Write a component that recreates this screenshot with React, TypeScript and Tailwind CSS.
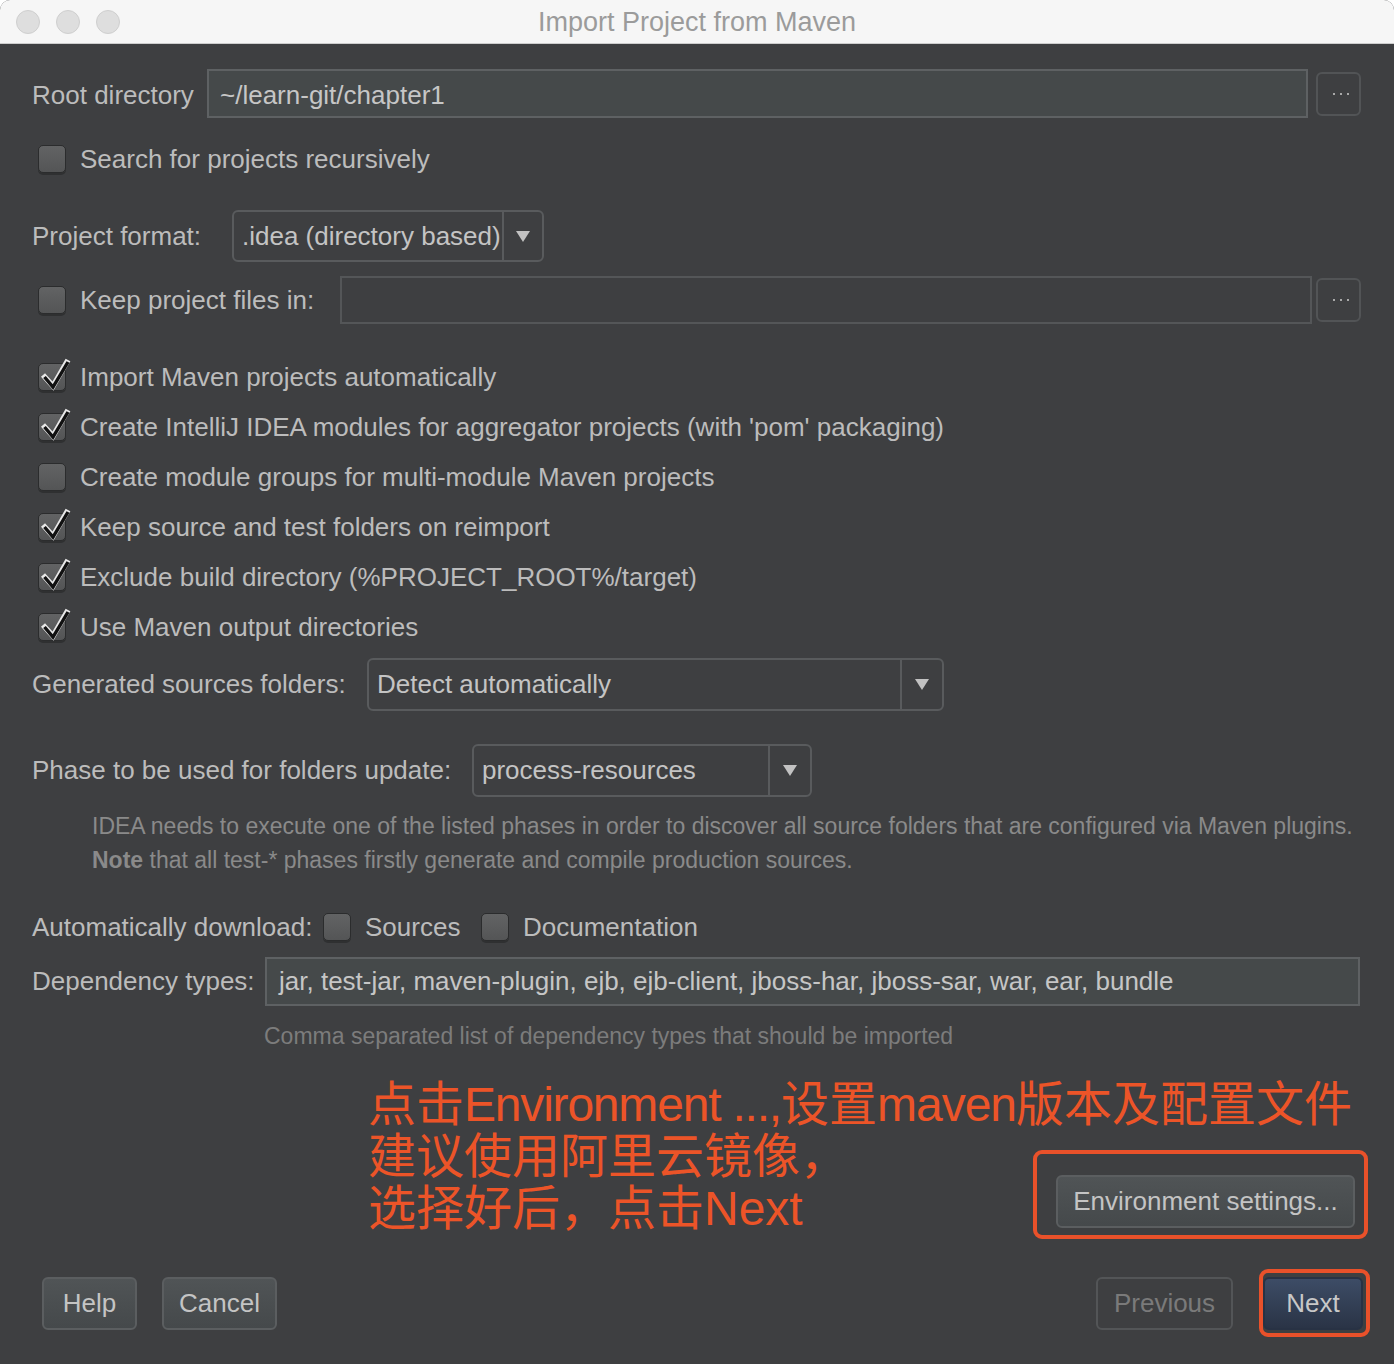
import React from "react";

const labelFont = "font-['Liberation_Sans',sans-serif]";

function CheckBox({ checked }: { checked?: boolean }) {
  return (
    <span className="relative inline-block h-[28px] w-[28px] shrink-0 rounded-[5px] border border-[#2b2c2d] bg-gradient-to-b from-[#626364] to-[#545556] shadow-[0_2px_0_#2f3031]">
      {checked && (
        <svg className="absolute left-[0px] top-[-8px]" width="34" height="36" viewBox="0 0 34 36">
          <path d="M4 19 L14 30 L29 4" fill="none" stroke="#e8e8e8" strokeWidth="5.5" strokeLinejoin="miter" />
          <path d="M5.5 21 L14 31 L29 6" fill="none" stroke="#111" strokeWidth="3.4" strokeLinejoin="miter" />
        </svg>
      )}
    </span>
  );
}

function DotsButton() {
  return (
    <div className="flex h-[44px] w-[45px] shrink-0 items-center justify-center rounded-[6px] border-2 border-[#525456] pl-[4px]">
      <span className="flex gap-[5px]">
        <span className="h-[2px] w-[2px] bg-[#a9a9a9]" />
        <span className="h-[2px] w-[2px] bg-[#a9a9a9]" />
        <span className="h-[2px] w-[2px] bg-[#a9a9a9]" />
      </span>
    </div>
  );
}

function Dropdown({ value, width, arrow = 40 }: { value: string; width: number; arrow?: number }) {
  return (
    <div
      className="flex h-full shrink-0 rounded-[6px] border-2 border-[#595b5d]"
      style={{ width }}
    >
      <div className="flex flex-1 items-center border-r-2 border-[#595b5d] pl-[8px] text-[26px] text-[#c4c4c4]">
        {value}
      </div>
      <div className="flex items-center justify-center" style={{ width: arrow }}>
        <svg width="14" height="11" viewBox="0 0 14 11">
          <path d="M0 0 H14 L7 11 Z" fill="#c2c2c2" />
        </svg>
      </div>
    </div>
  );
}

function CheckRow({ label, checked }: { label: string; checked?: boolean }) {
  return (
    <div className="flex h-[50px] items-center pl-[6px]">
      <CheckBox checked={checked} />
      <span className="ml-[14px] text-[26px] text-[#bcbcbc]">{label}</span>
    </div>
  );
}

function Button({ children, className = "" }: { children: React.ReactNode; className?: string }) {
  return (
    <div
      className={`flex h-[53px] items-center justify-center rounded-[6px] border-2 text-[26px] ${className}`}
    >
      {children}
    </div>
  );
}

export default function App() {
  return (
    <div className={`h-[1364px] w-[1394px] overflow-hidden bg-white ${labelFont}`}>
      <div className="flex h-[1364px] flex-col rounded-t-[10px] bg-[#3e3f41]">
        {/* Title bar */}
        <div className="relative flex h-[44px] shrink-0 items-center justify-center rounded-t-[10px] border-b border-[#cdcdcd] bg-[#f6f6f6]">
          <div className="absolute left-[16px] top-[10px] flex gap-[16px]">
            <span className="h-[24px] w-[24px] rounded-full border border-[#cfcfcf] bg-[#dedede]" />
            <span className="h-[24px] w-[24px] rounded-full border border-[#cfcfcf] bg-[#dedede]" />
            <span className="h-[24px] w-[24px] rounded-full border border-[#cfcfcf] bg-[#dedede]" />
          </div>
          <span className="pt-[2px] text-[27px] text-[#9b9b9b]">Import Project from Maven</span>
        </div>

        <div className="flex flex-1 flex-col pl-[32px] pr-[33px] text-[#bcbcbc]">
          {/* Root directory */}
          <div className="mt-[25px] flex h-[49px] items-center">
            <span className="w-[175px] shrink-0 pt-[4px] text-[26px]">Root directory</span>
            <div className="flex h-full flex-1 items-center border-2 border-[#5e6163] bg-[#45494a] pl-[11px] pt-[4px] text-[26px] text-[#c6c6c6]">
              ~/learn-git/chapter1
            </div>
            <div className="ml-[8px]">
              <DotsButton />
            </div>
          </div>

          {/* Search */}
          <div className="mt-[21px] flex h-[40px] items-center pl-[6px]">
            <CheckBox />
            <span className="ml-[14px] text-[26px]">Search for projects recursively</span>
          </div>

          {/* Project format */}
          <div className="mt-[31px] flex h-[52px] items-center">
            <span className="w-[200px] shrink-0 text-[26px]">Project format:</span>
            <Dropdown value=".idea (directory based)" width={312} arrow={38} />
          </div>

          {/* Keep project files */}
          <div className="mt-[14px] flex h-[48px] items-center">
            <div className="flex w-[308px] shrink-0 items-center pl-[6px]">
              <CheckBox />
              <span className="ml-[14px] text-[26px]">Keep project files in:</span>
            </div>
            <div className="h-full flex-1 border-2 border-[#545658]" />
            <div className="ml-[4px]">
              <DotsButton />
            </div>
          </div>

          {/* Options */}
          <div className="mt-[28px] flex flex-col">
            <CheckRow checked label="Import Maven projects automatically" />
            <CheckRow checked label="Create IntelliJ IDEA modules for aggregator projects (with 'pom' packaging)" />
            <CheckRow label="Create module groups for multi-module Maven projects" />
            <CheckRow checked label="Keep source and test folders on reimport" />
            <CheckRow checked label="Exclude build directory (%PROJECT_ROOT%/target)" />
            <CheckRow checked label="Use Maven output directories" />
          </div>

          {/* Generated sources */}
          <div className="mt-[6px] flex h-[53px] items-center">
            <span className="w-[335px] shrink-0 text-[26px]">Generated sources folders:</span>
            <Dropdown value="Detect automatically" width={577} />
          </div>

          {/* Phase */}
          <div className="mt-[33px] flex h-[53px] items-center">
            <span className="w-[440px] shrink-0 text-[26px]">Phase to be used for folders update:</span>
            <Dropdown value="process-resources" width={340} />
          </div>

          <div className="mt-[12px] whitespace-nowrap pl-[60px] text-[23px] leading-[34px] text-[#8a8a8a]">
            <div>IDEA needs to execute one of the listed phases in order to discover all source folders that are configured via Maven plugins.</div>
            <div>
              <span className="font-bold">Note</span> that all test-* phases firstly generate and compile production sources.
            </div>
          </div>

          {/* Automatically download */}
          <div className="mt-[30px] flex h-[40px] items-center">
            <span className="w-[291px] shrink-0 text-[26px]">Automatically download:</span>
            <CheckBox />
            <span className="ml-[14px] w-[116px] text-[26px]">Sources</span>
            <CheckBox />
            <span className="ml-[14px] text-[26px]">Documentation</span>
          </div>

          {/* Dependency types */}
          <div className="mt-[10px] flex h-[49px] items-center">
            <span className="w-[233px] shrink-0 text-[26px]">Dependency types:</span>
            <div className="mr-[1px] flex h-full flex-1 items-center border-2 border-[#5e6163] bg-[#45494a] pl-[12px] text-[26px] text-[#c6c6c6]">
              jar, test-jar, maven-plugin, ejb, ejb-client, jboss-har, jboss-sar, war, ear, bundle
            </div>
          </div>

          <div className="mt-[15px] flex h-[30px] items-center whitespace-nowrap pl-[232px] text-[23px] text-[#7c7c7c]">
            Comma separated list of dependency types that should be imported
          </div>

          {/* Annotation */}
          <div className="mt-[28px] whitespace-nowrap pl-[336px] font-['Liberation_Sans','Noto_Sans_CJK_SC',sans-serif] text-[48px] leading-[52px] text-[#ec5428]">
            点击<span className="tracking-[-1.2px]">Environment ...,</span>设置<span className="tracking-[-1px]">maven</span>版本及配置文件
          </div>
          <div className="-mr-[7px] flex items-start justify-between">
            <div className="whitespace-nowrap pl-[336px] font-['Liberation_Sans','Noto_Sans_CJK_SC',sans-serif] text-[48px] leading-[52px] text-[#ec5428]">
              <div>建议使用阿里云镜像，</div>
              <div>选择好后，点击Next</div>
            </div>
            <div className="mt-[19px] rounded-[9px] border-4 border-[#e9512a] pb-[7px] pl-[19px] pr-[9px] pt-[21px]">
              <Button className="w-[299px] border-[#5b5e60] bg-gradient-to-b from-[#505456] to-[#45494b] text-[#c4c4c4]">
                Environment settings...
              </Button>
            </div>
          </div>

          {/* Footer buttons */}
          <div className="-mr-[9px] mt-[30px] flex h-[68px] items-center">
            <div className="ml-[10px] flex gap-[25px]">
              <Button className="w-[95px] border-[#5b5e60] bg-gradient-to-b from-[#505456] to-[#45494b] text-[#c4c4c4]">
                Help
              </Button>
              <Button className="w-[115px] border-[#5b5e60] bg-gradient-to-b from-[#505456] to-[#45494b] text-[#c4c4c4]">
                Cancel
              </Button>
            </div>
            <div className="flex-1" />
            <Button className="w-[137px] border-[#535557] text-[#7a7a7a]">Previous</Button>
            <div className="ml-[26px] rounded-[9px] border-4 border-[#e9512a] pb-[3px] pr-[3px] pt-[4px]">
              <Button className="w-[100px] border-[#283244] bg-gradient-to-b from-[#3d4c66] to-[#2a3446] text-[#c8c8c8]">
                Next
              </Button>
            </div>
          </div>
        </div>
      </div>
    </div>
  );
}
